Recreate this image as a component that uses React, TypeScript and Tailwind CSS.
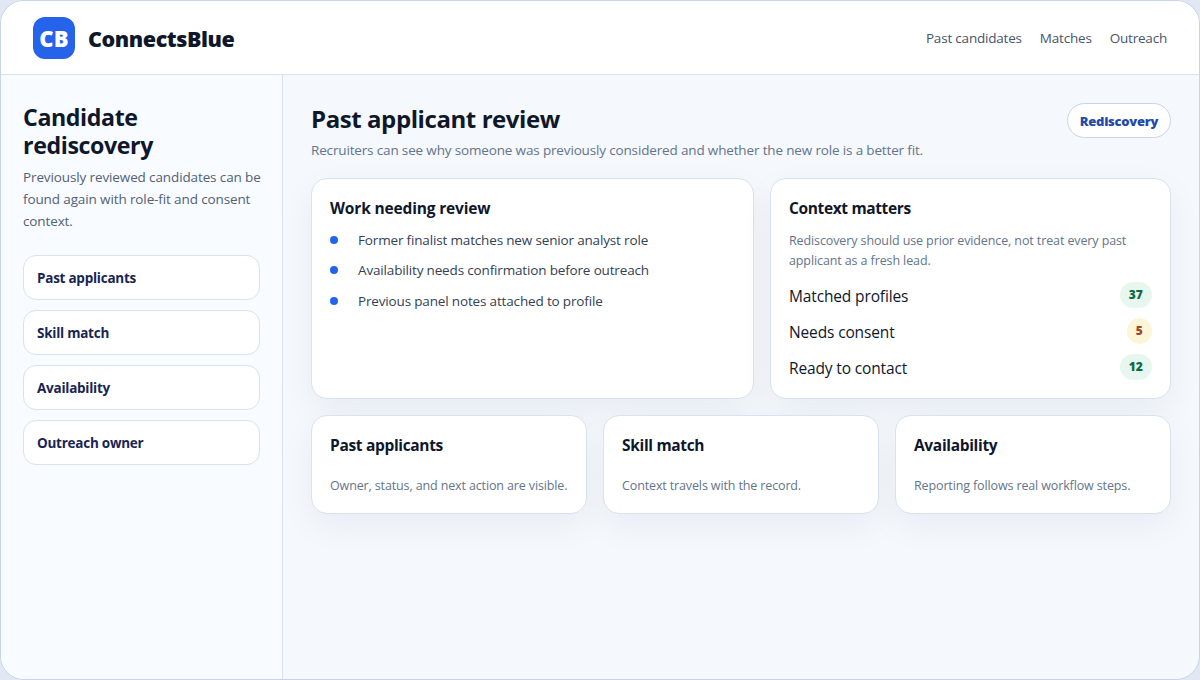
import React from 'react'
import clsx from 'clsx'

const navLinks = ['Past candidates', 'Matches', 'Outreach']

const sideItems = ['Past applicants', 'Skill match', 'Availability', 'Outreach owner']

const reviewItems = [
  'Former finalist matches new senior analyst role',
  'Availability needs confirmation before outreach',
  'Previous panel notes attached to profile',
]

const stats = [
  { label: 'Matched profiles', value: 37, tone: 'green' },
  { label: 'Needs consent', value: 5, tone: 'amber' },
  { label: 'Ready to contact', value: 12, tone: 'green' },
]

const summaries = [
  { title: 'Past applicants', text: 'Owner, status, and next action are visible.' },
  { title: 'Skill match', text: 'Context travels with the record.' },
  { title: 'Availability', text: 'Reporting follows real workflow steps.' },
]

const Card = ({ className, children }: { className?: string; children: React.ReactNode }) => (
  <div
    className={clsx(
      'rounded-2xl border border-[#d8e2f0] bg-white px-[18px] shadow-[0_12px_34px_rgba(15,23,42,0.055)]',
      className
    )}
  >
    {children}
  </div>
)

const App = () => {
  return (
    <div className="h-[680px] w-[1200px] bg-[#e1e8f3] font-['Open_Sans','Noto_Sans',sans-serif] text-[#0f172a]">
      <div className="flex h-full flex-col overflow-hidden rounded-[24px] border border-[#c8d5e8] bg-[#f5f8fd]">
        {/* Header */}
        <header className="flex h-[74px] shrink-0 items-center justify-between border-b border-[#d8e2f0] bg-white px-8">
          <div className="flex items-center gap-[13px]">
            <div className="flex h-[42px] w-[42px] items-center justify-center rounded-xl bg-[#2563eb] pt-[2px] text-[22px] font-extrabold tracking-[0.1px] text-white">
              CB
            </div>
            <span className="pt-[3px] text-[21.5px] font-extrabold tracking-[-0.42px]">ConnectsBlue</span>
          </div>
          <nav className="flex gap-[18px] pt-[2px] text-[13.5px] tracking-[-0.2px] text-[#475569]">
            {navLinks.map((link) => (
              <span key={link}>{link}</span>
            ))}
          </nav>
        </header>

        <div className="flex min-h-0 flex-1">
          {/* Sidebar */}
          <aside className="w-[282px] shrink-0 border-r border-[#d8e2f0] bg-[#f8fbff] px-[22px] pt-[28px]">
            <h2 className="text-[23.2px] leading-[28px] font-bold tracking-[-0.4px]">
              Candidate
              <br />
              rediscovery
            </h2>
            <p className="mt-[7px] text-[13.5px] leading-[22px] tracking-[-0.12px] whitespace-nowrap text-[#526176]">
              Previously reviewed candidates can be
              <br />
              found again with role-fit and consent
              <br />
              context.
            </p>
            <div className="mt-[23px] flex flex-col gap-[10px]">
              {sideItems.map((item) => (
                <div
                  key={item}
                  className="flex h-[45px] items-center rounded-[13px] border border-[#d8e2f0] bg-white px-[13px] pt-[2px] text-[13.5px] font-bold tracking-[-0.25px] text-[#172554]"
                >
                  {item}
                </div>
              ))}
            </div>
          </aside>

          {/* Main */}
          <main className="flex-1 px-[28px] pt-[28px]">
            <div className="flex h-[75px] items-start justify-between">
              <div>
                <h1 className="text-[24px] leading-[32px] font-bold tracking-[-0.42px]">Past applicant review</h1>
                <p className="mt-[4px] text-[13.5px] leading-[22px] tracking-[-0.155px] text-[#64748b]">
                  Recruiters can see why someone was previously considered and whether the new role is a better fit.
                </p>
              </div>
              <div className="flex h-[35px] w-[104px] items-center justify-center rounded-full border border-[#c8d5e8] bg-white pt-[2px] text-[13px] font-extrabold tracking-[-0.27px] text-[#1e4aa8]">
                Rediscovery
              </div>
            </div>

            <div className="grid grid-cols-[443px_1fr] gap-4">
              <Card className="h-[221px] pt-[18px]">
                <h3 className="text-[15.5px] leading-[22px] font-bold tracking-[-0.16px]">Work needing review</h3>
                <ul className="mt-[10px] flex flex-col gap-[8.4px]">
                  {reviewItems.map((item) => (
                    <li key={item} className="flex items-center gap-5 text-[13.5px] leading-[22px] tracking-[-0.16px] text-[#334155]">
                      <span className="h-2 w-2 rounded-full bg-[#2563eb]" />
                      {item}
                    </li>
                  ))}
                </ul>
              </Card>

              <Card className="h-[221px] pt-[18px]">
                <h3 className="text-[15.5px] leading-[22px] font-bold tracking-[-0.36px]">Context matters</h3>
                <p className="mt-[12px] text-[12.5px] leading-[20px] tracking-[-0.11px] whitespace-nowrap text-[#64748b]">
                  Rediscovery should use prior evidence, not treat every past
                  <br />
                  applicant as a fresh lead.
                </p>
                <div className="mt-[11px] flex flex-col gap-[10px]">
                  {stats.map((stat) => (
                    <div key={stat.label} className="flex h-[26px] items-center justify-between">
                      <span className="pt-[3px] text-[15.5px] tracking-[-0.14px]">{stat.label}</span>
                      <span
                        className={clsx(
                          'rounded-full px-[9px] text-[12px] leading-[26px] font-extrabold tracking-[0.1px]',
                          stat.tone === 'green' ? 'bg-[#e7f7ef] text-[#0f6b46]' : 'bg-[#fdf5d8] text-[#9a4a2c]'
                        )}
                      >
                        {stat.value}
                      </span>
                    </div>
                  ))}
                </div>
              </Card>
            </div>

            <div className="mt-4 grid grid-cols-3 gap-4">
              {summaries.map((summary) => (
                <Card key={summary.title} className="h-[99px] pt-[18px]">
                  <h3 className="text-[15.5px] leading-[22px] font-bold tracking-[-0.33px]">{summary.title}</h3>
                  <p className="mt-[20px] text-[12.5px] leading-[20px] tracking-[-0.13px] whitespace-nowrap text-[#64748b]">
                    {summary.text}
                  </p>
                </Card>
              ))}
            </div>
          </main>
        </div>
      </div>
    </div>
  )
}

export default App
